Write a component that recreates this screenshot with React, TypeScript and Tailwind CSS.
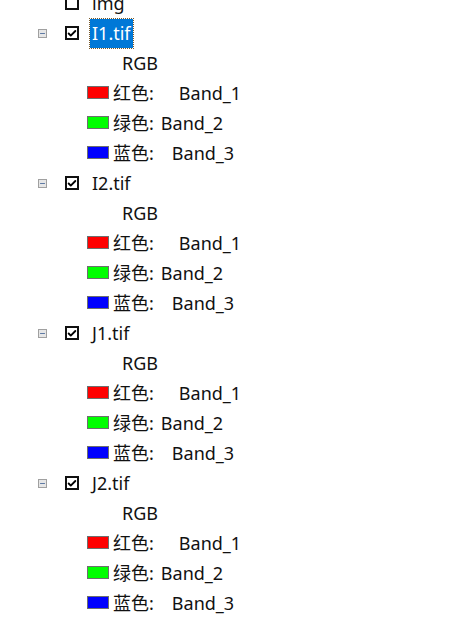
import { Check, Minus } from 'lucide-react';

type Band = { color: string; label: string; value: string; gap: string };

const bands: Band[] = [
  { color: 'bg-[#ff0000]', label: '红色:', value: 'Band_1', gap: 'ml-[25px]' },
  { color: 'bg-[#00ff00]', label: '绿色:', value: 'Band_2', gap: 'ml-[7px]' },
  { color: 'bg-[#0000ff]', label: '蓝色:', value: 'Band_3', gap: 'ml-[18px]' },
];

const layers = ['I1.tif', 'I2.tif', 'J1.tif', 'J2.tif'];

function CheckBox({ checked }: { checked: boolean }) {
  return (
    <div className="w-[14px] h-[14px] border-2 border-[#111] bg-white flex items-center justify-center">
      {checked && <Check className="w-[11px] h-[11px] text-black" strokeWidth={4.5} />}
    </div>
  );
}

function Expander() {
  return (
    <div className="w-[9px] h-[9px] border border-[#a0a0a0] bg-[#e6e6e6] flex items-center justify-center">
      <Minus className="w-[7px] h-[7px] text-[#4a6a9a]" strokeWidth={3} />
    </div>
  );
}

function LayerRow({ name, selected }: { name: string; selected: boolean }) {
  return (
    <>
      <div className="h-[30px] flex items-center">
        <div className="w-[38px]" />
        <Expander />
        <div className="w-[18px]" />
        <CheckBox checked />
        <div
          className={
            selected
              ? 'ml-[11px] h-[29px] px-[2px] flex items-center bg-[#0078d7] text-white outline-1 outline-dotted outline-[#7a5a2a]'
              : 'ml-[13px] flex items-center text-[#111]'
          }
        >
          {name}
        </div>
      </div>
      <div className="h-[30px] flex items-center pl-[122px] text-[#111]">RGB</div>
      {bands.map((b) => (
        <div key={b.value} className="h-[30px] flex items-center pl-[87px] text-[#111]">
          <div className={`w-[22px] h-[13px] border border-[#6e6e6e] ${b.color} -mt-[2px]`} />
          <span className="ml-[4px]">{b.label}</span>
          <span className={b.gap}>{b.value}</span>
        </div>
      ))}
    </>
  );
}

export default function App() {
  return (
    <div
      className="w-[469px] h-[625px] bg-white overflow-hidden text-[18px] leading-none"
      style={{ fontFamily: '"Noto Sans", "Noto Sans CJK SC", sans-serif' }}
    >
      <div className="-mt-[12px]">
        <div className="h-[30px] flex items-center">
          <div className="w-[65px]" />
          <CheckBox checked={false} />
          <span className="ml-[13px] text-[#111]">img</span>
        </div>
        {layers.map((l, i) => (
          <LayerRow key={l} name={l} selected={i === 0} />
        ))}
      </div>
    </div>
  );
}
